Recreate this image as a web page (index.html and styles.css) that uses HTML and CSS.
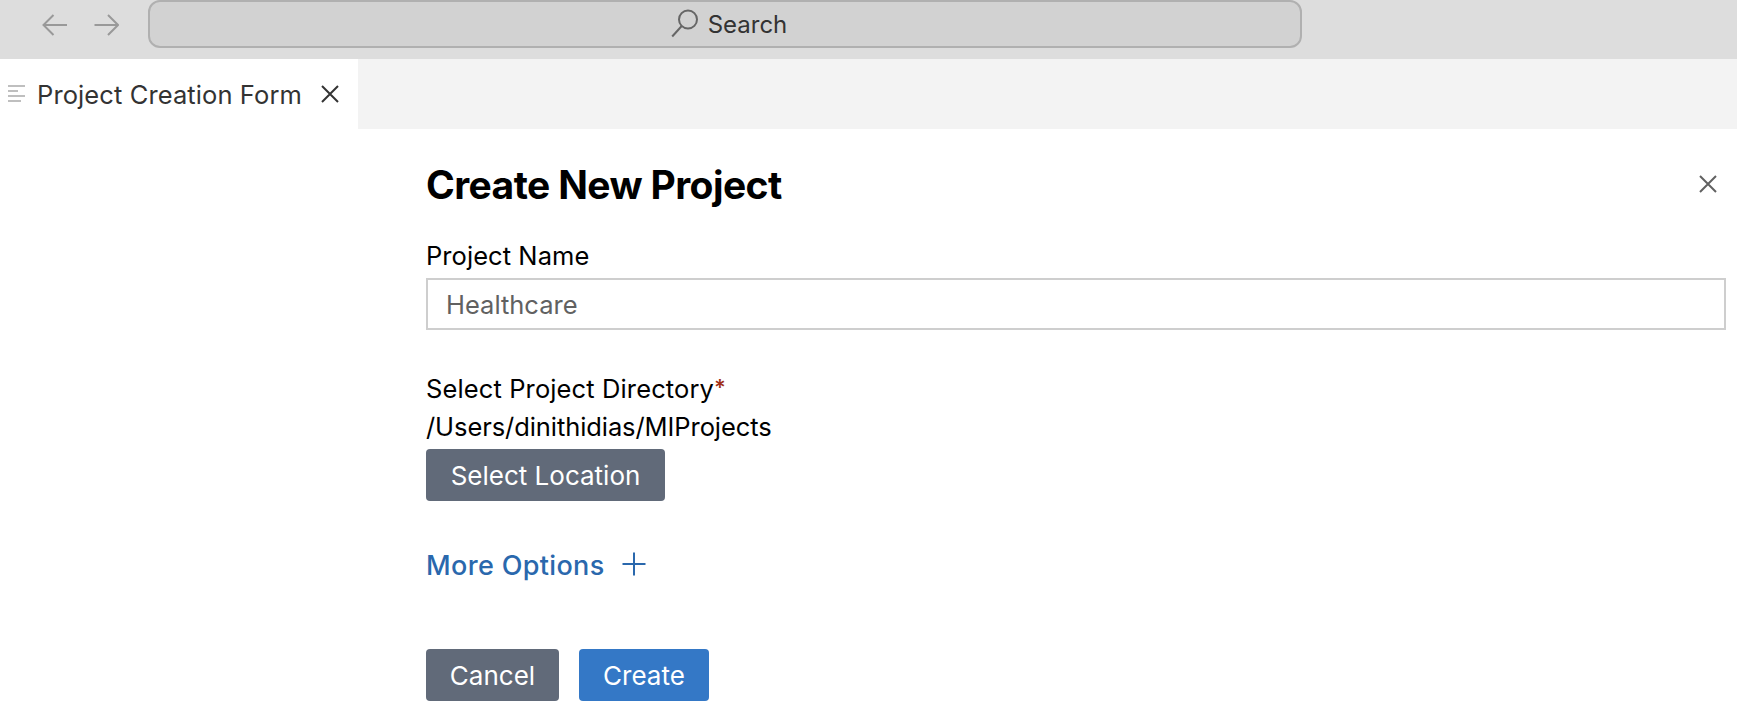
FILE: index.html
```html
<!DOCTYPE html>
<html lang="en">
<head>
<meta charset="utf-8">
<title>Project Creation Form</title>
<link rel="stylesheet" href="styles.css">
</head>
<body>
<header class="titlebar">
  <nav class="history">
    <svg class="arrow" viewBox="0 0 26 22"><path d="M25 11H1.500M11.500 1L1.500 11l10 10"/></svg>
    <svg class="arrow" viewBox="0 0 26 22"><path d="M1.500 11H25M15 1l10 10-10 10"/></svg>
  </nav>
  <div class="command">
    <svg class="lens" viewBox="0 0 28 29"><circle cx="17" cy="10.500" r="9"/><path d="M10.700 17L1.200 27.500"/></svg>
    <span class="search-text">Search</span>
  </div>
</header>
<div class="tabs">
  <div class="tab">
    <svg class="lines" viewBox="0 0 18 18"><path d="M0 1h17M0 6h10M0 11h17M0 16h13"/></svg>
    <span class="tab-text">Project Creation Form</span>
    <svg class="close tab-close" viewBox="0 0 18 18"><path d="M1 1l16 16M17 1L1 17"/></svg>
  </div>
</div>
<main class="form">
  <div class="heading">
    <h1 class="title">Create New Project</h1>
    <svg class="close form-close" viewBox="0 0 18 18"><path d="M1 1l16 16M17 1L1 17"/></svg>
  </div>
  <label class="label name-label" for="name">Project Name</label>
  <input class="field" id="name" placeholder="Healthcare">
  <div class="label dir-label">Select Project Directory<span class="required">*</span></div>
  <div class="label path">/Users/dinithidias/MIProjects</div>
  <button class="button location">Select Location</button>
  <div class="more">
    <span class="more-text">More Options</span>
    <svg class="plus" viewBox="0 0 24 24"><path d="M12 .5v23M.5 12h23"/></svg>
  </div>
  <div class="actions">
    <button class="button cancel">Cancel</button>
    <button class="button primary">Create</button>
  </div>
</main>
</body>
</html>
```
FILE: styles.css
```css
* { box-sizing: border-box; }
body {
  margin: 0;
  height: 711px;
  overflow: hidden;
  background: #fff;
  color: #000;
  font-family: Inter, "Liberation Sans", sans-serif;
  font-size: 25.5px;
}
svg { display: block; flex: none; fill: none; stroke: currentColor; stroke-width: 2; }
.titlebar { display: flex; height: 59px; background: #ddd; }
.history { display: flex; width: 148px; padding: 14px 0 0 42px; gap: 25px; color: #999; }
.arrow { width: 26px; height: 22px; }
.command {
  display: flex;
  justify-content: center;
  width: 1154px;
  height: 48px;
  padding-left: 8px;
  border: 2px solid #b0b0b0;
  border-radius: 12px;
  background: #d2d2d2;
}
.lens { width: 28px; height: 29px; margin: 7px 9px 0 0; color: #666; }
.search-text { font-size: 24px; line-height: 46px; color: #333; }
.tabs { height: 70px; background: #f3f3f3; }
.tab { display: flex; width: 358px; height: 70px; padding-left: 8px; background: #fff; color: #333; }
.lines { width: 18px; height: 18px; margin-top: 26px; color: #bfbfbf; }
.tab-text { width: 284px; margin-left: 11px; line-height: 72px; letter-spacing: .1px; white-space: nowrap; }
.close { width: 18px; height: 18px; }
.tab-close { margin-top: 26px; }
.form { padding: 31px 11px 0 426px; }
.heading { display: flex; justify-content: space-between; height: 77px; }
.title { margin: 0; font-size: 39px; font-weight: 700; line-height: 50px; letter-spacing: -.6px; white-space: nowrap; }
.form-close { margin: 15px 9px 0 0; color: #616161; }
.label { display: block; height: 38px; line-height: 38px; white-space: nowrap; }
.name-label { height: 41px; letter-spacing: .06px; }
.field {
  display: block;
  width: 100%;
  height: 52px;
  padding: 1px 18px 0;
  border: 2px solid #cecece;
  background: #fff;
  font: inherit;
}
.field::placeholder { color: #616161; opacity: 1; }
.dir-label { margin-top: 40px; letter-spacing: .12px; }
.path { letter-spacing: -.08px; }
.required { font-size: 22px; font-weight: 600; line-height: 1; vertical-align: 3px; color: #a03018; }
.button {
  display: flex;
  align-items: center;
  justify-content: center;
  height: 52px;
  padding: 0;
  border: 0;
  border-radius: 4px;
  background: #616a79;
  color: #fff;
  font: inherit;
  font-size: 26px;
}
.location { width: 239px; margin-top: 3px; }
.more { display: flex; height: 38px; margin-top: 45px; color: #2a68ad; }
.more-text { width: 196px; font-size: 27px; font-weight: 500; line-height: 40px; letter-spacing: .35px; white-space: nowrap; }
.plus { width: 24px; height: 24px; margin-top: 6px; }
.actions { display: flex; gap: 20px; margin-top: 65px; }
.cancel { width: 133px; }
.primary { width: 130px; background: #3478c6; }
```
